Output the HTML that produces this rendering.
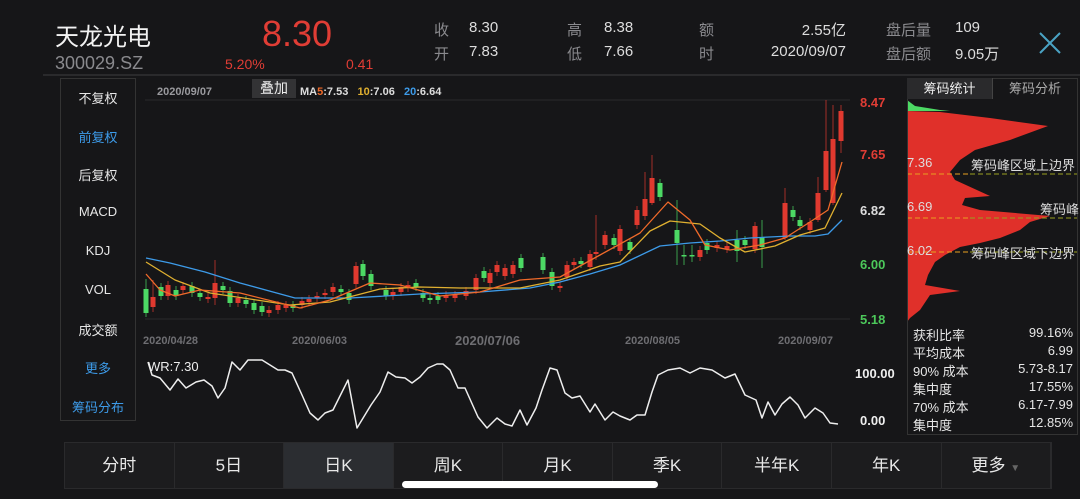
<!DOCTYPE html>
<html><head><meta charset="utf-8">
<style>
*{margin:0;padding:0;box-sizing:border-box}
body{width:1080px;height:499px;background:#161618;overflow:hidden;position:relative;font-family:"Liberation Sans","Noto Sans CJK SC",sans-serif;color:#ddd}
.a{position:absolute;white-space:nowrap}
.g{color:#8a8a8e}
.red{color:#e03d35}
.side{position:absolute;left:60px;top:78px;width:76px;height:343px;border:1px solid #333;}
.side div{position:absolute;left:0;width:74px;text-align:center;font-size:13px;color:#e6e6e6}
.side .b{color:#3d9be9}
.tabs{position:absolute;left:64px;top:442px;width:988px;height:47px;background:#1c1c1e;border:1px solid #2a2a2c;display:flex}
.tabs div{flex:1;border-right:1px solid #2a2a2c;text-align:center;line-height:46px;font-size:17px;color:#e8e8e8}
.tabs .s{background:#2b2d31}
.st{position:absolute;left:913px;width:160px;font-size:13px;color:#e6e6e6}
.st span{position:absolute;right:0}
</style></head><body>
<div class="a" style="left:55px;top:17px;font-size:24px;color:#f2f2f2">天龙光电</div>
<div class="a g" style="left:55px;top:53px;font-size:18px">300029.SZ</div>
<div class="a red" style="left:262px;top:13px;font-size:36px">8.30</div>
<div class="a red" style="left:225px;top:56px;font-size:14px">5.20%</div>
<div class="a red" style="left:346px;top:56px;font-size:14px">0.41</div>
<div class="a g" style="left:434px;top:19px;font-size:15px">收</div>
<div class="a g" style="left:434px;top:43px;font-size:15px">开</div>
<div class="a" style="left:469px;top:19px;font-size:15px">8.30</div>
<div class="a" style="left:469px;top:43px;font-size:15px">7.83</div>
<div class="a g" style="left:567px;top:19px;font-size:15px">高</div>
<div class="a g" style="left:567px;top:43px;font-size:15px">低</div>
<div class="a" style="left:604px;top:19px;font-size:15px">8.38</div>
<div class="a" style="left:604px;top:43px;font-size:15px">7.66</div>
<div class="a g" style="left:699px;top:19px;font-size:15px">额</div>
<div class="a g" style="left:699px;top:43px;font-size:15px">时</div>
<div class="a" style="right:234px;top:19px;font-size:15px">2.55亿</div>
<div class="a" style="right:234px;top:43px;font-size:15px">2020/09/07</div>
<div class="a g" style="left:886px;top:19px;font-size:15px">盘后量</div>
<div class="a g" style="left:886px;top:43px;font-size:15px">盘后额</div>
<div class="a" style="left:955px;top:19px;font-size:15px">109</div>
<div class="a" style="left:955px;top:43px;font-size:15px">9.05万</div>
<svg class="a" style="left:1038px;top:32px" width="24" height="22"><path d="M2 1L22 21M22 1L2 21" stroke="#4aa3c4" stroke-width="2"/></svg>
<div class="a" style="left:43px;top:74px;width:1037px;height:2px;background:#2a2a2c"></div>

<div class="side">
<div style="top:9px">不复权</div><div class="b" style="top:48px">前复权</div><div style="top:86px">后复权</div>
<div style="top:125px">MACD</div><div style="top:164px">KDJ</div><div style="top:203px">VOL</div>
<div style="top:241px">成交额</div><div class="b" style="top:279px">更多</div><div class="b" style="top:318px">筹码分布</div>
</div>

<div class="a" style="left:157px;top:86px;font-size:11px;color:#9a9a9e;font-weight:bold">2020/09/07</div>
<div class="a" style="left:252px;top:79px;width:44px;height:19px;background:#333335;font-size:14px;text-align:center;line-height:19px;color:#eee">叠加</div>
<div class="a" style="left:300px;top:86px;font-size:11px;font-weight:bold;color:#ddd">MA<span style="color:#f06a2a">5</span>:7.53 &nbsp;&nbsp;<span style="color:#e0b030">10</span>:7.06 &nbsp;&nbsp;<span style="color:#3d9be9">20</span>:6.64</div>

<div class="a red" style="left:860px;top:95px;font-size:13px;font-weight:bold">8.47</div>
<div class="a red" style="left:860px;top:147px;font-size:13px;font-weight:bold">7.65</div>
<div class="a" style="left:860px;top:203px;font-size:13px;font-weight:bold;color:#ddd">6.82</div>
<div class="a" style="left:860px;top:257px;font-size:13px;font-weight:bold;color:#4cc85a">6.00</div>
<div class="a" style="left:860px;top:312px;font-size:13px;font-weight:bold;color:#4cc85a">5.18</div>
<div class="a" style="left:855px;top:366px;font-size:13px;font-weight:bold;color:#eee">100.00</div>
<div class="a" style="left:860px;top:413px;font-size:13px;font-weight:bold;color:#eee">0.00</div>

<div class="a" style="left:143px;top:335px;font-size:11px;font-weight:bold;color:#6e6e72">2020/04/28</div>
<div class="a" style="left:292px;top:335px;font-size:11px;font-weight:bold;color:#6e6e72">2020/06/03</div>
<div class="a" style="left:455px;top:333px;font-size:13px;font-weight:bold;color:#6e6e72">2020/07/06</div>
<div class="a" style="left:625px;top:335px;font-size:11px;font-weight:bold;color:#6e6e72">2020/08/05</div>
<div class="a" style="left:778px;top:335px;font-size:11px;font-weight:bold;color:#6e6e72">2020/09/07</div>
<div class="a" style="left:148px;top:359px;font-size:13px;color:#eee">WR:7.30</div>

<svg id="ch" class="a" style="left:0;top:0" width="1080" height="499"></svg>

<div class="a" style="left:907px;top:78px;width:171px;height:357px;border:1px solid #333"></div>
<div class="a" style="left:907px;top:78px;width:86px;height:21px;background:#2a2a2c;font-size:13px;text-align:center;line-height:21px;color:#eee;border-right:1px solid #444">筹码统计</div>
<div class="a" style="left:993px;top:78px;width:84px;height:21px;font-size:13px;text-align:center;line-height:21px;color:#aaa">筹码分析</div>
<div class="a" style="left:907px;top:155px;font-size:13px;color:#ddd">7.36</div>
<div class="a" style="left:971px;top:155px;font-size:13px;color:#ddd">筹码峰区域上边界</div>
<div class="a" style="left:907px;top:199px;font-size:13px;color:#ddd">6.69</div>
<div class="a" style="left:1040px;top:199px;font-size:13px;color:#ddd">筹码峰</div>
<div class="a" style="left:907px;top:243px;font-size:13px;color:#ddd">6.02</div>
<div class="a" style="left:971px;top:243px;font-size:13px;color:#ddd">筹码峰区域下边界</div>

<div class="st" style="top:325px">获利比率<span>99.16%</span></div>
<div class="st" style="top:343px">平均成本<span>6.99</span></div>
<div class="st" style="top:361px">90% 成本<span>5.73-8.17</span></div>
<div class="st" style="top:379px">集中度<span>17.55%</span></div>
<div class="st" style="top:397px">70% 成本<span>6.17-7.99</span></div>
<div class="st" style="top:415px">集中度<span>12.85%</span></div>

<div class="tabs"><div>分时</div><div>5日</div><div class="s">日K</div><div>周K</div><div>月K</div><div>季K</div><div>半年K</div><div>年K</div><div>更多 <span style="font-size:10px;color:#666">▼</span></div></div>
<div class="a" style="left:402px;top:481px;width:256px;height:7px;border-radius:4px;background:#fff"></div>

<script>
var s='';
s+='<line x1="145" y1="100" x2="850" y2="100" stroke="#2a2a2c"/><line x1="145" y1="319" x2="850" y2="319" stroke="#2a2a2c"/>';
var c=[[146,289,313,'g',279,317],[153,297,307,'r',280,312],[161,287,296,'g'],[168,285,296,'r'],[176,290,296,'g'],[183,286,290,'r'],[192,286,293,'g'],[200,293,297,'g'],[208,297,299,'r'],[215,283,298,'r',260,305],[223,286,290,'g'],[230,291,303,'g'],[238,298,303,'r'],[246,300,304,'g'],[254,303,310,'g'],[262,306,312,'g'],[269,310,313,'r'],[278,305,310,'r'],[286,305,308,'r'],[293,305,308,'g'],[302,301,305,'r'],[309,299,302,'r'],[317,296,298,'r'],[325,293,295,'r'],[333,287,292,'r'],[341,289,292,'g'],[349,293,300,'g'],[356,266,284,'r'],[363,264,276,'g'],[371,274,286,'g'],[386,290,296,'g'],[393,292,296,'r'],[401,287,292,'r'],[408,285,288,'r'],[416,283,287,'g'],[423,293,298,'g'],[430,298,300,'g'],[438,296,300,'g'],[446,295,298,'r'],[455,295,298,'r'],[466,291,296,'r'],[476,278,290,'r'],[484,271,278,'g'],[490,273,283,'r'],[497,265,272,'r'],[505,268,276,'r'],[513,265,274,'r'],[521,258,268,'g'],[543,257,270,'g'],[552,272,286,'g'],[560,286,288,'r'],[567,265,277,'r'],[574,262,265,'r'],[581,261,264,'g'],[590,254,267,'r'],[596,252,254,'r',215,260],[605,235,245,'r'],[614,238,245,'g'],[620,229,251,'r'],[630,242,250,'g'],[637,210,225,'r'],[645,199,216,'r',172,220],[652,178,203,'r',155,205],[660,183,197,'g'],[677,230,243,'g',200,265],[684,255,256,'g',245,265],[692,255,256,'g',245,262],[700,250,257,'r'],[707,243,250,'g'],[717,245,248,'r'],[727,246,249,'r'],[737,240,251,'g',230,262],[745,240,245,'g'],[755,226,249,'r'],[762,237,247,'g',220,268],[785,203,238,'r',188,240],[793,210,217,'g'],[800,220,226,'g'],[810,222,230,'r'],[818,193,220,'r',177,222],[826,151,190,'r',100,192],[833,139,203,'r',105,205],[841,111,141,'r',105,153]];
c.forEach(function(k){var col=k[3]=='g'?'#4cd964':'#e0392f';var wt=k[4]||k[1]-4,wb=k[5]||k[2]+4;
s+='<line x1="'+k[0]+'" y1="'+wt+'" x2="'+k[0]+'" y2="'+wb+'" stroke="'+col+'" stroke-opacity=".7"/>';
s+='<rect x="'+(k[0]-2.5)+'" y="'+k[1]+'" width="5" height="'+Math.max(1.5,k[2]-k[1])+'" fill="'+col+'"/>';});
function pl(p,col,w){s+='<polyline points="'+p+'" fill="none" stroke="'+col+'" stroke-width="'+(w||1.3)+'" stroke-linejoin="round"/>';}
pl('146,258 170,263 205,272 240,283 295,298 350,298 420,294 480,292 530,288 560,282 590,274 620,265 660,246 690,243 720,241 750,238 790,236 815,236 828,234 842,220','#3d9be9');
pl('146,262 175,280 210,293 290,305 330,302 380,289 420,287 460,288 520,288 560,280 600,266 620,262 650,231 670,221 700,224 720,238 745,252 775,246 800,235 825,228 842,193','#e0b030');
pl('146,274 160,290 175,296 200,290 240,293 300,308 330,300 370,283 400,285 440,296 480,292 520,280 560,277 600,255 640,233 668,202 690,220 705,245 730,250 760,245 785,238 810,222 828,210 842,162','#f06a2a');
pl('148,362 152,375 160,378 170,390 178,379 186,388 196,382 204,380 212,386 218,398 225,388 232,362 240,370 248,360 262,360 270,365 278,370 285,370 292,373 302,395 310,413 318,420 325,413 333,410 348,380 357,428 371,405 380,392 388,372 396,377 405,378 412,383 420,377 428,368 437,364 443,364 450,370 458,388 465,388 478,417 487,428 497,418 505,424 512,426 520,410 527,425 536,408 542,390 550,368 557,370 565,393 572,398 580,396 590,412 595,404 605,420 613,412 620,416 630,420 637,415 645,415 652,392 658,375 668,370 680,368 690,373 700,368 712,370 725,378 735,374 745,395 756,400 762,418 768,402 775,415 782,404 790,397 798,405 805,418 815,408 823,413 830,423 838,424','#eee',1.5);
s+='<polygon points="907,100 915,106 940,110 950,111 907,111" fill="#4cd964"/>';
s+='<polygon points="907,111 940,112 990,118 1048,126 1010,140 975,150 960,160 950,172 955,180 990,196 965,198 962,205 980,210 1050,216 1030,222 1020,230 1000,238 980,243 960,247 945,255 935,262 928,275 925,285 960,291 930,295 920,310 910,318 907,322" fill="#e0302a"/>';
[174,218,252].forEach(function(y){s+='<line x1="907" y1="'+y+'" x2="970" y2="'+y+'" stroke="#e8a020" stroke-dasharray="5,3"/><line x1="970" y1="'+y+'" x2="1078" y2="'+y+'" stroke="#9aa020" stroke-dasharray="5,3"/>';});
document.getElementById('ch').innerHTML=s;
</script>
</body></html>
